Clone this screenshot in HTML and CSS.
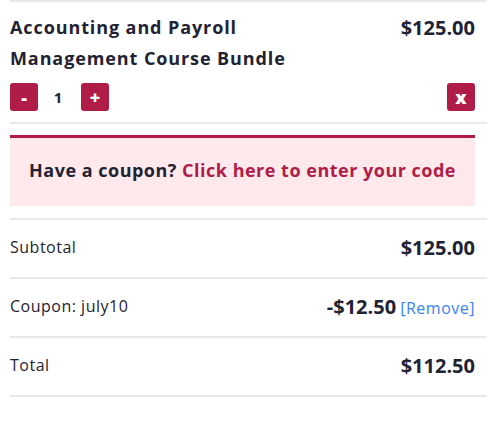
FILE: index.html
```html
<!DOCTYPE html>
<html lang="en">
<head>
    <meta charset="UTF-8">
    <meta name="viewport" content="width=device-width, initial-scale=1.0">
    <title>Cart</title>
    <link rel="stylesheet" href="styles.css">
</head>
<body>
    <div class="cart">
        <div class="cart-item">
            <div class="item-head">
                <div class="item-name">Accounting and Payroll Management Course Bundle</div>
                <div class="price">$125.00</div>
            </div>
            <div class="item-actions">
                <div class="qty">
                    <button class="btn">-</button>
                    <span class="qty-value">1</span>
                    <button class="btn">+</button>
                </div>
                <button class="btn">x</button>
            </div>
        </div>

        <div class="coupon-box">
            Have a coupon? <a href="#" class="coupon-link">Click here to enter your code</a>
        </div>

        <div class="summary-row">
            <span class="label">Subtotal</span>
            <span class="price">$125.00</span>
        </div>
        <div class="summary-row">
            <span class="label">Coupon: july10</span>
            <span><span class="price">-$12.50</span> <a href="#" class="remove-link">[Remove]</a></span>
        </div>
        <div class="summary-row">
            <span class="label">Total</span>
            <span class="price">$112.50</span>
        </div>
    </div>
</body>
</html>
```

FILE: styles.css
```css
body {
    margin: 0;
    padding: 0 0 0 10px;
    font-family: "Open Sans", sans-serif;
    background: #fff;
    color: #1f2333;
}

.cart {
    width: 477px;
    border-top: 2px solid #e8e8e8;
}

.cart-item {
    padding: 10px 12px 11px 0;
    border-bottom: 2px solid #e8e8e8;
}

.item-head {
    display: flex;
    justify-content: space-between;
    align-items: flex-start;
}

.item-name {
    width: 300px;
    font-size: 18px;
    font-weight: 700;
    line-height: 31px;
    letter-spacing: 0.9px;
}

.price {
    font-size: 20px;
    font-weight: 700;
    line-height: 31px;
}

.item-actions {
    display: flex;
    justify-content: space-between;
    align-items: center;
    margin-top: 9px;
}

.qty {
    display: flex;
    align-items: center;
}

.qty-value {
    width: 40px;
    padding-right: 3px;
    text-align: center;
    font-size: 15px;
    font-weight: 700;
}

.btn {
    width: 28px;
    height: 28px;
    padding: 0;
    border: none;
    border-radius: 3px;
    background: #b01c48;
    color: #fff;
    font-family: "Open Sans", sans-serif;
    font-size: 18px;
    font-weight: 800;
    line-height: 28px;
    cursor: pointer;
}

.coupon-box {
    margin: 11px 12px 12px 0;
    border-top: 3px solid #b01c48;
    background: #ffe9ec;
    height: 68px;
    line-height: 64px;
    text-align: center;
    font-size: 18px;
    font-weight: 700;
    letter-spacing: 0.5px;
}

.coupon-link {
    color: #b01c48;
    text-decoration: none;
}

.summary-row {
    display: flex;
    justify-content: space-between;
    align-items: center;
    height: 54px;
    padding: 0 12px 3px 0;
    border-top: 2px solid #e8e8e8;
}

.summary-row:last-child {
    border-bottom: 2px solid #e8e8e8;
}

.label {
    font-size: 16px;
    letter-spacing: 0.5px;
}

.remove-link {
    color: #3b82f6;
    font-size: 16px;
    letter-spacing: 0.5px;
    text-decoration: none;
}
```
